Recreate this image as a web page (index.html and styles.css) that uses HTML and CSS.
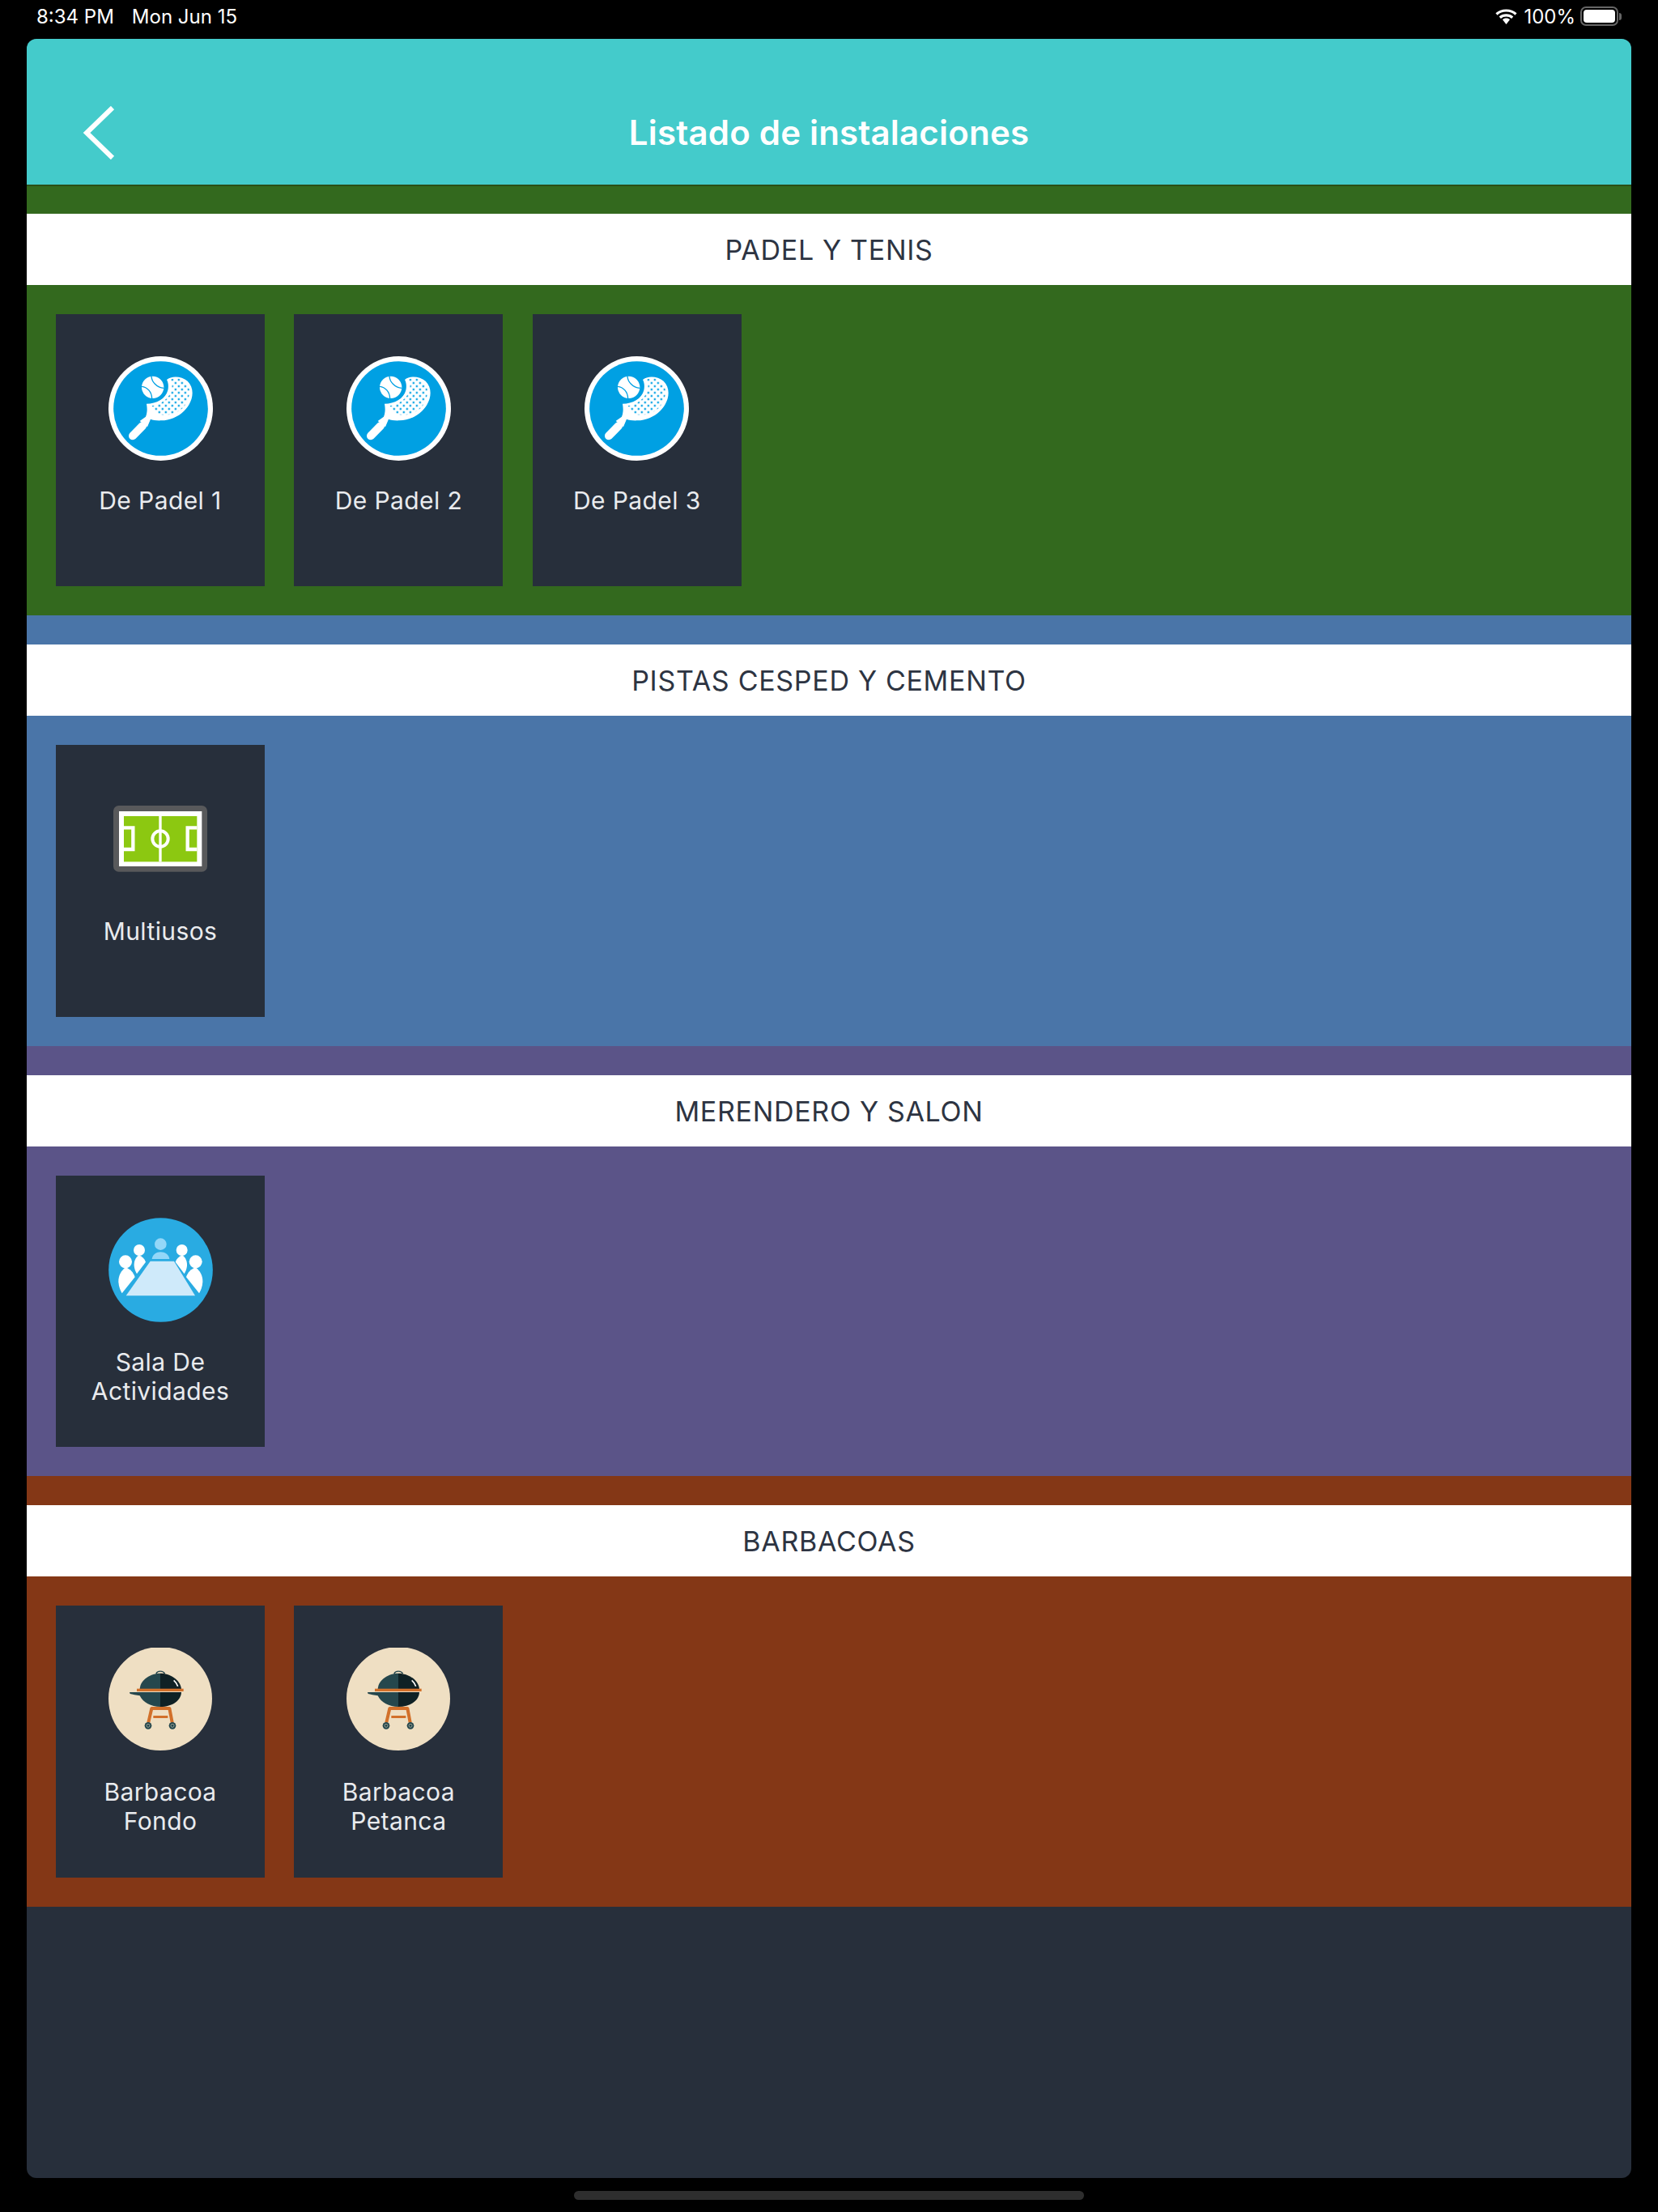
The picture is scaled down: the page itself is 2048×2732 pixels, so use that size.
FILE: index.html
```html
<!DOCTYPE html>
<html lang="es">
  <head>
    <meta charset="UTF-8" />
    <meta name="viewport" content="width=device-width, initial-scale=1.0" />
    <title>Listado de instalaciones</title>
    <link rel="stylesheet" href="styles.css">
  </head>
  <body>
    <svg class="icon-defs" aria-hidden="true">
      <defs>
        <pattern id="racketDots" width="17" height="17" patternUnits="userSpaceOnUse" patternTransform="rotate(45 190 120)">
          <rect x="5" y="5" width="7" height="7" fill="#00a0e3" />
        </pattern>
        <symbol id="iconPadel" viewBox="-48 -30 387 387">
          <circle cx="145.500" cy="163.500" r="193.500" fill="#fff" />
          <circle cx="145.500" cy="163.500" r="175" fill="#00a0e3" />
          <path fill="#fff" d="M168 57C184 42 222 42 245 62C268 84 268 120 250 150C230 184 190 208 148 208C130 209 116 206 108 203L96 232L68 210L90 194C96 180 96 162 93 146C130 146 164 128 172 96C175 82 174 68 168 57Z" />
          <path fill="none" stroke="#fff" stroke-width="30" stroke-linecap="round" d="M78 228L42 265" />
          <path fill="url(#racketDots)" d="M182 56C204 44 232 54 246 76C258 98 252 130 234 154C216 178 182 192 140 186L112 154C146 150 180 124 186 92C189 78 188 66 182 56Z" />
          <circle cx="116" cy="85" r="41" fill="#fff" />
          <path fill="none" stroke="#00a0e3" stroke-width="4" d="M111 44C112 64 130 86 157 88M75 82C96 84 112 102 113 126" />
        </symbol>
        <symbol id="iconPitch" viewBox="42 6 387 387">
          <rect x="60" y="75" width="348" height="245" rx="20" fill="#58595b" />
          <rect x="81" y="96" width="307" height="204" fill="#fff" />
          <rect x="99" y="114" width="271" height="169" fill="#8cc811" />
          <rect x="229" y="114" width="10" height="169" fill="#fff" />
          <circle cx="234" cy="198" r="29" fill="none" stroke="#fff" stroke-width="12" />
          <path fill="none" stroke="#fff" stroke-width="13" d="M99 157H133V237H99M370 157H335V237H370" />
        </symbol>
        <symbol id="iconMeeting" viewBox="42 42 387 387">
          <circle cx="235.500" cy="235.500" r="193" fill="#29abe2" />
          <circle cx="235" cy="140" r="22" fill="#93d7f8" />
          <path fill="#93d7f8" d="M203 195C205 178 220 169 235 169C251 169 266 178 268 195Z" />
          <path fill="#cfeafa" d="M197 203H285L363 331H107Z" />
          <g id="meetingPeople" fill="#fff">
            <circle cx="105" cy="205" r="24" />
            <path d="M105 226C90 238 78 256 79 280C80 298 86 312 92 322L140 262C134 244 122 232 105 226Z" />
            <circle cx="156" cy="162" r="21" />
            <path d="M154 181C142 190 136 204 137 220C138 232 142 242 147 250L180 206C176 194 166 185 154 181Z" />
          </g>
          <use href="#meetingPeople" transform="matrix(-1 0 0 1 470 0)" />
        </symbol>
        <symbol id="iconGrill" viewBox="42 33 387 387">
          <circle cx="234" cy="222" r="192" fill="#efdfc3" />
          <path fill="none" stroke="#25474d" stroke-width="5" d="M219 130C222 118 246 118 250 130" />
          <path fill="#efdfc3" d="M222 128C226 120 243 120 247 128Z" />
          <path fill="#25474d" d="M234 128C200 128 160 150 158 186H234Z" />
          <path fill="#0f2125" d="M234 128C268 128 308 150 312 186H234Z" />
          <path fill="none" stroke="#fff" stroke-width="5" d="M284 154C291 160 296 167 299 176" />
          <rect x="147" y="185" width="173" height="10" fill="#d2702a" />
          <path fill="#25474d" d="M120 198H234V252C200 252 170 236 158 211C146 209 130 206 122 204Z" />
          <path fill="#0f2125" d="M234 198H312C311 228 280 252 234 252Z" />
          <path fill="none" stroke="#d2702a" stroke-width="12" stroke-linejoin="round" d="M190 310L202 258H268L278 310" />
          <rect x="208" y="285" width="54" height="9" fill="#d2702a" />
          <circle cx="189" cy="322" r="13" fill="#25474d" />
          <circle cx="279" cy="322" r="13" fill="#25474d" />
          <circle cx="189" cy="322" r="6" fill="none" stroke="#c9c5b0" stroke-width="2" />
          <circle cx="279" cy="322" r="6" fill="none" stroke="#c9c5b0" stroke-width="2" />
        </symbol>
      </defs>
    </svg>

    <div class="status-bar">
      <div class="status-time"><span>8:34 PM</span><span>Mon Jun 15</span></div>
      <div class="status-right">
        <svg class="wifi" viewBox="0 0 27 19">
          <path fill="none" stroke="#fff" stroke-width="3.200" d="M1.500 6.500C8 .5 19 .5 25.500 6.500M5.800 10.800C10 7 17 7 21.200 10.800" />
          <path fill="#fff" d="M13.500 11.500C15.500 11.500 17 12.200 18 13.200L13.500 19L9 13.200C10 12.200 11.500 11.500 13.500 11.500Z" />
        </svg>
        <span>100%</span>
        <div class="battery"><div class="battery-fill"></div></div>
        <div class="battery-nub"></div>
      </div>
    </div>

    <div class="app">
      <header class="app-header">
        <svg class="back-icon" viewBox="0 0 40 66">
          <path fill="none" stroke="#fff" stroke-width="6" d="M37 2L5 33L37 64" />
        </svg>
        <h1 class="app-title">Listado de instalaciones</h1>
        <div></div>
      </header>

      <section class="group group-green">
        <h2 class="group-title">PADEL Y TENIS</h2>
        <div class="tile-list">
          <div class="tile"><svg class="tile-icon"><use href="#iconPadel" /></svg><div class="tile-label">De Padel 1</div></div>
          <div class="tile"><svg class="tile-icon"><use href="#iconPadel" /></svg><div class="tile-label">De Padel 2</div></div>
          <div class="tile"><svg class="tile-icon"><use href="#iconPadel" /></svg><div class="tile-label">De Padel 3</div></div>
        </div>
      </section>

      <section class="group group-blue">
        <h2 class="group-title">PISTAS CESPED Y CEMENTO</h2>
        <div class="tile-list">
          <div class="tile"><svg class="tile-icon"><use href="#iconPitch" /></svg><div class="tile-label">Multiusos</div></div>
        </div>
      </section>

      <section class="group group-purple">
        <h2 class="group-title">MERENDERO Y SALON</h2>
        <div class="tile-list">
          <div class="tile"><svg class="tile-icon"><use href="#iconMeeting" /></svg><div class="tile-label">Sala De Actividades</div></div>
        </div>
      </section>

      <section class="group group-brown">
        <h2 class="group-title">BARBACOAS</h2>
        <div class="tile-list">
          <div class="tile"><svg class="tile-icon"><use href="#iconGrill" /></svg><div class="tile-label">Barbacoa Fondo</div></div>
          <div class="tile"><svg class="tile-icon"><use href="#iconGrill" /></svg><div class="tile-label">Barbacoa Petanca</div></div>
        </div>
      </section>
    </div>

    <div class="home-bar"></div>
  </body>
</html>
```

FILE: styles.css
```css
body {
  margin: 0;
  height: 2732px;
  overflow: hidden;
  background: #000;
  font-family: "Inter", "Liberation Sans", sans-serif;
}

.icon-defs {
  position: absolute;
  width: 0;
  height: 0;
}

.status-bar {
  height: 40px;
  margin-bottom: 8px;
  padding: 0 45px;
  display: flex;
  justify-content: space-between;
  align-items: center;
  color: #fff;
  font-size: 24px;
}

.status-time {
  display: flex;
  gap: 22px;
}

.status-right {
  display: flex;
  align-items: center;
}

.wifi {
  width: 27px;
  height: 19px;
  margin-right: 8px;
}

.battery {
  width: 47px;
  height: 24px;
  box-sizing: border-box;
  margin-left: 6px;
  padding: 2px;
  border: 2px solid #666;
  border-radius: 7px;
}

.battery-fill {
  height: 100%;
  background: #fff;
  border-radius: 4px;
}

.battery-nub {
  width: 3px;
  height: 9px;
  margin-left: 1px;
  background: #666;
  border-radius: 0 3px 3px 0;
}

.app {
  width: 1982px;
  height: 2642px;
  margin: 0 33px;
  background: #272f3b;
  border-radius: 12px;
  overflow: hidden;
}

.app-header {
  position: relative;
  height: 182.400px;
  margin-bottom: -2px;
  box-sizing: border-box;
  padding: 50px 69px 0;
  display: grid;
  grid-template-columns: 1fr auto 1fr;
  align-items: center;
  background: #44cbcb;
  border-bottom: 2px solid #2a4f17;
}

.back-icon {
  width: 40px;
  height: 66px;
  margin-top: 2px;
}

.app-title {
  margin: 0;
  color: #fff;
  font-size: 42px;
  font-weight: 600;
  letter-spacing: 0.2px;
}

.group {
  padding: 36px 0;
}

.group-green {
  background: #33691e;
}

.group-blue {
  background: #4a75a8;
}

.group-purple {
  background: #5b5488;
}

.group-brown {
  background: #843716;
}

.group-title {
  margin: 0;
  height: 88px;
  line-height: 90px;
  background: #fff;
  color: #2d3442;
  font-size: 34px;
  font-weight: 400;
  letter-spacing: 0.7px;
  text-align: center;
}

.tile-list {
  display: flex;
  gap: 36.400px;
  padding: 36px 36px 0;
}

.tile {
  width: 258px;
  height: 335.600px;
  box-sizing: border-box;
  padding: 52px 20px 0;
  display: flex;
  flex-direction: column;
  align-items: center;
  background: #272f3b;
}

.tile-icon {
  width: 129px;
  height: 129px;
  flex: none;
}

.tile-label {
  margin-top: 31px;
  color: #e9ebee;
  font-size: 30px;
  line-height: 36px;
  letter-spacing: 0.4px;
  text-align: center;
}

.home-bar {
  width: 630px;
  height: 11px;
  margin: 16px auto 0;
  background: #2e2e2e;
  border-radius: 6px;
}
```
